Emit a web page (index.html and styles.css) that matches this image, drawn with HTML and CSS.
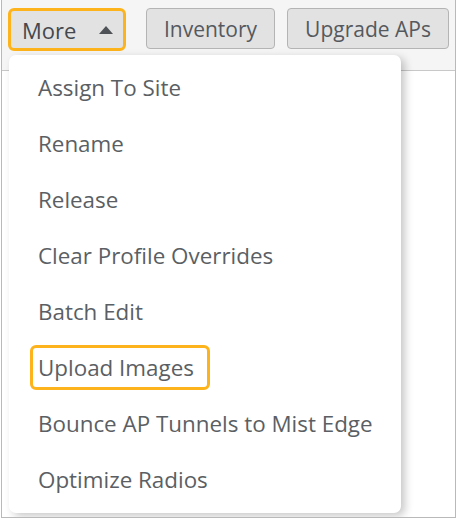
FILE: index.html
```html
<!DOCTYPE html>
<html lang="en">
<head>
    <meta charset="UTF-8">
    <title>Access Points - More menu</title>
    <link rel="stylesheet" href="styles.css">
</head>
<body>
    <div class="frame">
        <div class="toolbar">
            <button class="btn btn-more marked">More <span class="caret"></span></button>
            <button class="btn btn-inventory">Inventory</button>
            <button class="btn btn-upgrade">Upgrade APs</button>
        </div>
        <div class="content"></div>

        <ul class="menu">
            <li>Assign To Site</li>
            <li>Rename</li>
            <li>Release</li>
            <li>Clear Profile Overrides</li>
            <li>Batch Edit</li>
            <li><span class="marked-item">Upload Images</span></li>
            <li>Bounce AP Tunnels to Mist Edge</li>
            <li>Optimize Radios</li>
        </ul>
    </div>
</body>
</html>
```

FILE: styles.css
```css
body {
    margin: 0;
    font-family: 'Open Sans', 'Noto Sans', sans-serif;
    background: #fff;
}

.frame {
    position: relative;
    width: 453px;
    height: 517px;
    margin-left: 1px;
    border-left: 1px solid #b9b9b9;
    border-right: 1px solid #b9b9b9;
    border-bottom: 1px solid #b9b9b9;
    overflow: hidden;
}

.toolbar {
    display: flex;
    align-items: flex-start;
    height: 71px;
    padding: 8px 0 0 6px;
    box-sizing: border-box;
    background: #f5f5f5;
    border-bottom: 1px solid #c8c8c8;
}

.btn {
    flex-shrink: 0;
    box-sizing: border-box;
    height: 41px;
    padding: 0;
    margin-right: 12px;
    font-family: inherit;
    font-size: 21px;
    white-space: nowrap;
    color: #55595e;
    background: #e2e2e2;
    border: 1px solid #b4b4b4;
    border-radius: 4px;
}

.btn-inventory { width: 129px; }
.btn-upgrade { width: 162px; margin-right: 0; }

.btn-more {
    display: flex;
    align-items: center;
    height: 43px;
    width: 118px;
    padding: 0 0 0 11px;
    margin-right: 20px;
    font-size: 22px;
    color: #44484e;
}

.marked {
    border: 3px solid #fdb31c;
    border-radius: 6px;
}

.caret {
    width: 0;
    height: 0;
    margin-left: 23px;
    border-left: 7px solid transparent;
    border-right: 7px solid transparent;
    border-bottom: 8px solid #4f5257;
}

.menu {
    position: absolute;
    left: 7px;
    top: 55px;
    width: 392px;
    margin: 0;
    padding: 4px 0 6px;
    list-style: none;
    background: #fff;
    border-radius: 7px;
    box-shadow: 4px 3px 9px rgba(0, 0, 0, 0.22);
}

.menu li {
    height: 56px;
    display: flex;
    align-items: center;
    padding-left: 29px;
    font-size: 22.4px;
    color: #5b5f64;
}

.marked-item {
    margin-left: -8px;
    padding: 4px 13px 4px 5px;
    border: 3px solid #fdb31c;
    border-radius: 6px;
}
```
